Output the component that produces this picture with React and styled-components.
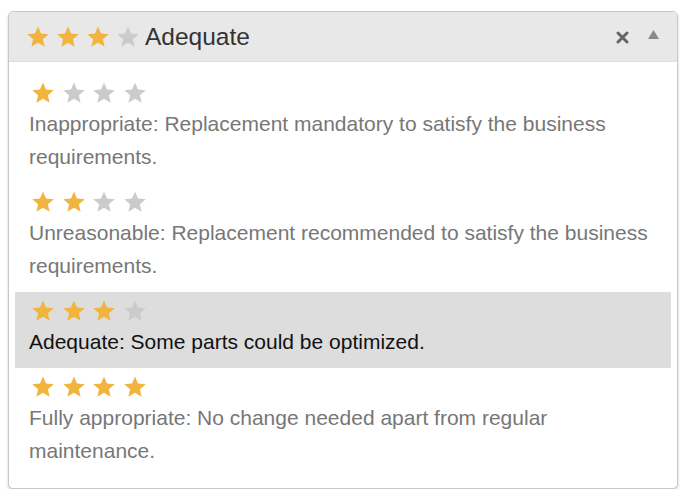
import React from "react";
import styled, { createGlobalStyle } from "styled-components";

const GlobalStyle = createGlobalStyle`
  html, body {
    margin: 0;
    padding: 0;
    background: #fff;
    font-family: "Liberation Sans", Arial, sans-serif;
  }
`;

const Page = styled.div`
  padding: 11px 0 0 8px;
`;

const Panel = styled.div`
  width: 670px;
  box-sizing: border-box;
  border: 1px solid #c8c8c8;
  border-radius: 5px;
  box-shadow: 0 2px 3px rgba(0, 0, 0, 0.18);
  background: #fff;
  overflow: hidden;
`;

const Header = styled.div`
  height: 49px;
  display: flex;
  align-items: center;
  padding: 0 0 0 18px;
  background: #e8e8e8;
  border-bottom: 1px solid #e0e0e0;
`;

const Stars = styled.div`
  display: flex;
  align-items: center;
  gap: ${(p) => p.$gap}px;
`;

const Selected = styled.span`
  margin-left: 6px;
  font-size: 24.5px;
  color: #333;
  flex: 1;
`;

const IconButton = styled.span`
  display: flex;
  align-items: center;
  justify-content: center;
  width: ${(p) => p.$w}px;
  margin-top: ${(p) => p.$mt || 0}px;
`;

const List = styled.ul`
  list-style: none;
  margin: 0;
  padding: 12px 6px 11px 6px;
`;

const Item = styled.li`
  padding: 4px 14px 10px 14px;
  background: ${(p) => (p.$active ? "#dddddd" : "transparent")};
`;

const StarRow = styled.div`
  height: 29px;
  display: flex;
  align-items: center;
  padding-left: 3px;
`;

const Desc = styled.div`
  font-size: 21px;
  line-height: 33px;
  color: ${(p) => (p.$active ? "#111" : "#777")};
`;

const GOLD = "#f0b43f";
const GREY = "#cbcbcb";

function Star({ size, on }) {
  return (
    <svg width={size} height={size} viewBox="0 0 24 24">
      <polygon
        points="12,0.5 15.29,8.27 23.7,9 17.33,14.53 19.23,22.75 12,18.4 4.77,22.75 6.67,14.53 0.3,9 8.71,8.27"
        fill={on ? GOLD : GREY}
      />
    </svg>
  );
}

function Rating({ value, size, gap }) {
  return (
    <Stars $gap={gap}>
      {[1, 2, 3, 4].map((n) => (
        <Star key={n} size={size} on={n <= value} />
      ))}
    </Stars>
  );
}

const options = [
  { value: 1, text: "Inappropriate: Replacement mandatory to satisfy the business requirements." },
  { value: 2, text: "Unreasonable: Replacement recommended to satisfy the business requirements." },
  { value: 3, text: "Adequate: Some parts could be optimized." },
  { value: 4, text: "Fully appropriate: No change needed apart from regular maintenance." },
];

export default function App() {
  const current = 3;
  return (
    <Page>
      <GlobalStyle />
      <Panel>
        <Header>
          <Rating value={current} size={22} gap={8} />
          <Selected>Adequate</Selected>
          <IconButton $w={14} $mt={2}>
            <svg width="13" height="13" viewBox="0 0 13 13">
              <path d="M2 2 L11 11 M11 2 L2 11" stroke="#666" strokeWidth="3" strokeLinecap="round" />
            </svg>
          </IconButton>
          <IconButton $w={48} $mt={-5}>
            <svg width="11" height="9" viewBox="0 0 11 9">
              <polygon points="5.5,0 11,9 0,9" fill="#888" />
            </svg>
          </IconButton>
        </Header>
        <List>
          {options.map((o) => (
            <Item key={o.value} $active={o.value === current}>
              <StarRow>
                <Rating value={o.value} size={22} gap={8.7} />
              </StarRow>
              <Desc $active={o.value === current}>{o.text}</Desc>
            </Item>
          ))}
        </List>
      </Panel>
    </Page>
  );
}
